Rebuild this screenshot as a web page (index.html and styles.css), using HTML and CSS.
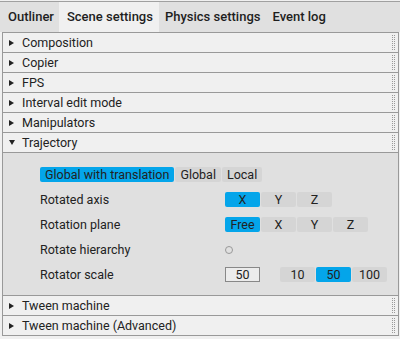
FILE: index.html
```html
<!DOCTYPE html>
<html lang="en">
<head>
    <meta charset="UTF-8">
    <title>Scene settings</title>
    <link rel="stylesheet" href="styles.css">
</head>
<body>
    <div class="tabs">
        <div class="tab">Outliner</div>
        <div class="tab active">Scene settings</div>
        <div class="tab">Physics settings</div>
        <div class="tab">Event log</div>
    </div>

    <div class="panel">
        <div class="section"><div class="head"><span class="arrow"></span>Composition<span class="grip"></span></div></div>
        <div class="section"><div class="head"><span class="arrow"></span>Copier<span class="grip"></span></div></div>
        <div class="section"><div class="head"><span class="arrow"></span>FPS<span class="grip"></span></div></div>
        <div class="section"><div class="head"><span class="arrow"></span>Interval edit mode<span class="grip"></span></div></div>
        <div class="section"><div class="head"><span class="arrow"></span>Manipulators<span class="grip"></span></div></div>
        <div class="section open">
            <div class="head"><span class="arrow"></span>Trajectory<span class="grip"></span></div>
            <div class="body">
                <div class="row">
                    <div class="btns">
                        <span class="btn wide on">Global with translation</span>
                        <span class="btn wide">Global</span>
                        <span class="btn wide">Local</span>
                    </div>
                </div>
                <div class="row">
                    <div class="label">Rotated axis</div>
                    <div class="btns">
                        <span class="btn on">X</span>
                        <span class="btn">Y</span>
                        <span class="btn">Z</span>
                    </div>
                </div>
                <div class="row">
                    <div class="label">Rotation plane</div>
                    <div class="btns">
                        <span class="btn on">Free</span>
                        <span class="btn">X</span>
                        <span class="btn">Y</span>
                        <span class="btn">Z</span>
                    </div>
                </div>
                <div class="row">
                    <div class="label">Rotate hierarchy</div>
                    <span class="radio"></span>
                </div>
                <div class="row">
                    <div class="label">Rotator scale</div>
                    <input class="num" type="text" value="50">
                    <div class="btns scale">
                        <span class="btn">10</span>
                        <span class="btn on">50</span>
                        <span class="btn">100</span>
                    </div>
                </div>
            </div>
        </div>
        <div class="section"><div class="head"><span class="arrow"></span>Tween machine<span class="grip"></span></div></div>
        <div class="section"><div class="head"><span class="arrow"></span>Tween machine (Advanced)<span class="grip"></span></div></div>
    </div>
</body>
</html>
```

FILE: styles.css
```css
body {
    margin: 0;
    padding-top: 1px;
    background-color: #f0f0f0;
    font-family: Roboto, "Liberation Sans", sans-serif;
    color: #222;
}
.tabs {
    display: flex;
    height: 30px;
    border-top: 1px solid #a0a0a0;
    background-color: #e0e0e0;
}
.tab {
    padding: 0 6px;
    line-height: 30px;
    font-size: 13px;
    font-weight: 500;
    color: #1e1e1e;
}
.tab:first-child {
    padding: 0 5px 0 8px;
}
.tab.active {
    background-color: #f0f0f0;
    padding: 0 6px 0 8px;
}
.panel {
    margin: 0 1px 0 2px;
    border: 1px solid #999;
    border-bottom: none;
}
.section {
    border-bottom: 1px solid #999;
}
.head {
    position: relative;
    display: flex;
    align-items: center;
    height: 19px;
    padding-left: 6px;
    font-size: 12.5px;
    background-color: #f0f0f0;
}
.arrow {
    width: 0;
    height: 0;
    margin-right: 8px;
    border-top: 3px solid transparent;
    border-bottom: 3px solid transparent;
    border-left: 5px solid #222;
}
.open .arrow {
    border-left: 3px solid transparent;
    border-right: 3px solid transparent;
    border-top: 5px solid #222;
    border-bottom: none;
    margin-right: 7px;
}
.open .head {
    border-bottom: 1px solid #999;
}
.grip {
    position: absolute;
    right: 3px;
    top: 2px;
    width: 1px;
    height: 15px;
    border-left: 1px dotted #999;
    border-right: 1px dotted #999;
}
.body {
    background-color: #e0e0e0;
    padding: 9px 0 8px 37px;
}
.row {
    display: flex;
    align-items: center;
    height: 25px;
    font-size: 12.5px;
}
.label {
    width: 185px;
}
.btns {
    display: flex;
    gap: 1px;
}
.btn {
    width: 35px;
    height: 15px;
    line-height: 15px;
    text-align: center;
    background-color: #d5d5d5;
    border-radius: 2px;
    font-size: 12.5px;
}
.btn.wide {
    width: auto;
    padding: 0 5px;
}
.btn.on {
    background-color: #04a5ea;
}
.btns.scale {
    margin-left: 20px;
}
.radio {
    width: 6px;
    height: 6px;
    border: 1px solid #999;
    border-radius: 50%;
}
.num {
    width: 33px;
    height: 13px;
    margin: 0;
    padding: 0;
    border: 1px solid #888;
    background-color: #ececec;
    font-family: Roboto, "Liberation Sans", sans-serif;
    font-size: 12.5px;
    color: #222;
    text-align: center;
}
```
